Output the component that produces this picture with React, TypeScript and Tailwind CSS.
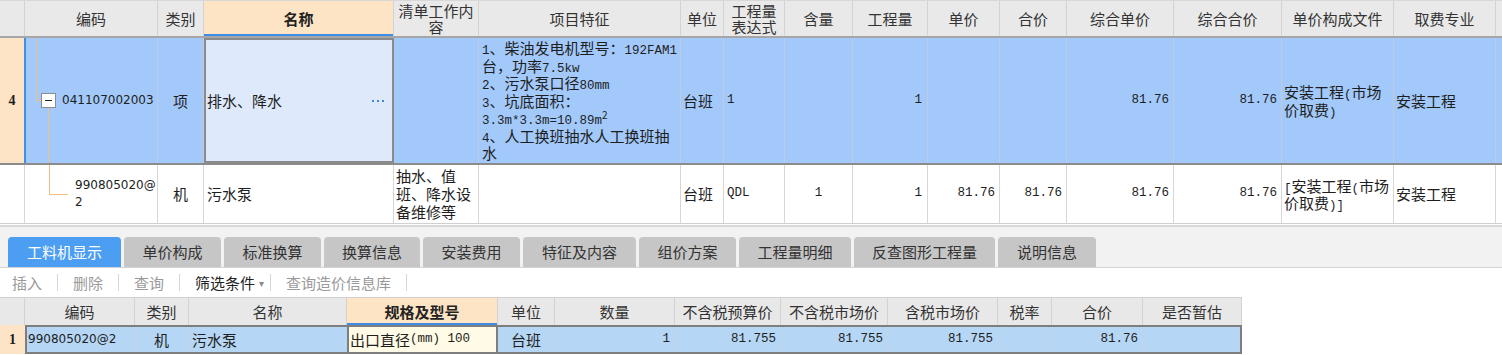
import React from "react";

function Mix({ s }: { s: string }) {
  const parts = s.match(/[\x20-\x7e]+|[^\x20-\x7e]+/g) || [];
  return (
    <>
      {parts.map((p, i) =>
        /^[\x20-\x7e]+$/.test(p) ? (
          <span key={i} className="font-['Liberation_Mono',monospace] text-[12.5px]">
            {p}
          </span>
        ) : (
          <span key={i}>{p}</span>
        )
      )}
    </>
  );
}

function HC({ w, children, hl }: { w: string; children?: React.ReactNode; hl?: boolean }) {
  return (
    <div
      className={`${w} shrink-0 h-full border-r border-[#d3d3d3] flex items-center justify-center text-center leading-[17px] whitespace-nowrap ${
        hl ? "bg-[#fde4c4] font-bold text-[#222] shadow-[inset_0_-2px_0_#3d8de8]" : ""
      }`}
    >
      {children}
    </div>
  );
}

function C({ w, children, cls = "" }: { w: string; children?: React.ReactNode; cls?: string }) {
  return <div className={`${w} shrink-0 h-full flex items-center whitespace-nowrap ${cls}`}>{children}</div>;
}

const Num = ({ v }: { v: string }) => (
  <span className="font-['Liberation_Mono',monospace] text-[12.5px]">{v}</span>
);

const L = ({ children }: { children: React.ReactNode }) => (
  <div className="h-[17.5px] leading-[17.5px] whitespace-nowrap overflow-visible">{children}</div>
);

const tabs: { t: string; w: string; active?: boolean }[] = [
  { t: "工料机显示", w: "w-[113px]", active: true },
  { t: "单价构成", w: "w-[97px]" },
  { t: "标准换算", w: "w-[97px]" },
  { t: "换算信息", w: "w-[96px]" },
  { t: "安装费用", w: "w-[97px]" },
  { t: "特征及内容", w: "w-[113px]" },
  { t: "组价方案", w: "w-[97px]" },
  { t: "工程量明细", w: "w-[112px]" },
  { t: "反查图形工程量", w: "w-[141px]" },
  { t: "说明信息", w: "w-[98px]" },
];

export default function App() {
  const b4 = "border-r border-[#bccbe0]";
  const b2 = "border-r border-[#d6d6d6]";
  const bl = "border-r border-[#c2d3e6]";
  return (
    <div className="w-[1502px] h-[355px] overflow-hidden bg-white font-['Noto_Sans_CJK_SC',sans-serif] text-[15px] text-[#1e1e1e] leading-[17.5px]">
      {/* top header */}
      <div className="flex h-[38px] bg-[#e9e9e9] text-[#333] border-t border-[#d8d8d8] border-b-2 border-b-[#a6a6a6]">
        <HC w="w-[25px]" />
        <HC w="w-[133px]">编码</HC>
        <HC w="w-[46px]">类别</HC>
        <HC w="w-[190px]" hl>
          名称
        </HC>
        <HC w="w-[85px]">
          <div className="leading-[16px]">
            清单工作内
            <br />容
          </div>
        </HC>
        <HC w="w-[202px]">项目特征</HC>
        <HC w="w-[43px]">单位</HC>
        <HC w="w-[61px]">
          <div className="leading-[16px]">
            工程量
            <br />
            表达式
          </div>
        </HC>
        <HC w="w-[68px]">含量</HC>
        <HC w="w-[75px]">工程量</HC>
        <HC w="w-[72px]">单价</HC>
        <HC w="w-[67px]">合价</HC>
        <HC w="w-[107px]">综合单价</HC>
        <HC w="w-[108px]">综合合价</HC>
        <HC w="w-[112px]">单价构成文件</HC>
        <HC w="w-[102px]">取费专业</HC>
        <div className="flex-1" />
      </div>

      {/* row 4 */}
      <div className="flex h-[127px] bg-[#a2c9fa] border-b-2 border-[#8b8b8b]">
        <div className="w-[24px] shrink-0 h-full bg-[#fde4c6] flex items-center justify-center font-['Liberation_Serif',serif] font-bold text-[14px]">
          4
        </div>
        <div className="w-[134px] shrink-0 h-full relative border-l-2 border-l-[#3f8fe8] border-r border-r-[#bccbe0] flex items-center pl-[36px] font-['DejaVu_Sans',sans-serif] text-[12px]">
          <div className="absolute left-[10px] top-0 h-[62px] w-px bg-[#f2c07e]" />
          <div className="absolute left-[10px] top-[62px] w-[5px] h-px bg-[#f2c07e]" />
          <div className="absolute left-[15px] top-[55px] w-[15px] h-[15px] border border-[#8d8d8d] bg-white flex items-center justify-center">
            <div className="w-[7px] h-px bg-[#222]" />
          </div>
          <div className="absolute left-[22px] top-[70px] bottom-0 w-px bg-[#f2c07e]" />
          041107002003
        </div>
        <C w="w-[46px]" cls={`${b4} justify-center`}>
          项
        </C>
        <C w="w-[190px]" cls="bg-[#deeafb] border-2 border-[#8a8a8a] justify-between pl-[1px] pr-[8px]">
          <span>排水、降水</span>
          <span className="flex gap-[3px] items-center">
            <span className="w-[2px] h-[2px] bg-[#3f86dc]" />
            <span className="w-[2px] h-[2px] bg-[#3f86dc]" />
            <span className="w-[2px] h-[2px] bg-[#3f86dc]" />
          </span>
        </C>
        <C w="w-[85px]" cls={b4} />
        <C w="w-[202px]" cls={`${b4} pl-[3px]`}>
          <div className="flex flex-col">
            <L>
              <Mix s="1、柴油发电机型号：192FAM1" />
            </L>
            <L>
              <Mix s="台，功率7.5kw" />
            </L>
            <L>
              <Mix s="2、污水泵口径80mm" />
            </L>
            <L>
              <Mix s="3、坑底面积：" />
            </L>
            <L>
              <Mix s="3.3m*3.3m=10.89m" />
              <span className="text-[10px] relative top-[-5px] leading-none">2</span>
            </L>
            <L>
              <Mix s="4、人工换班抽水人工换班抽" />
            </L>
            <L>水</L>
          </div>
        </C>
        <C w="w-[43px]" cls={`${b4} pl-[2px]`}>
          台班
        </C>
        <C w="w-[61px]" cls={`${b4} pl-[3px]`}>
          <Num v="1" />
        </C>
        <C w="w-[68px]" cls={b4} />
        <C w="w-[75px]" cls={`${b4} justify-end pr-[5px]`}>
          <Num v="1" />
        </C>
        <C w="w-[72px]" cls={b4} />
        <C w="w-[67px]" cls={b4} />
        <C w="w-[107px]" cls={`${b4} justify-end pr-[4px]`}>
          <Num v="81.76" />
        </C>
        <C w="w-[108px]" cls={`${b4} justify-end pr-[4px]`}>
          <Num v="81.76" />
        </C>
        <C w="w-[112px]" cls={`${b4} pl-[2px]`}>
          <div>
            <L>
              <Mix s="安装工程(市场" />
            </L>
            <L>
              <Mix s="价取费)" />
            </L>
          </div>
        </C>
        <C w="w-[102px]" cls={`${b4} pl-[2px]`}>
          安装工程
        </C>
        <div className="flex-1" />
      </div>

      {/* row 2 */}
      <div className="flex h-[59px] bg-white border-b border-[#d0d0d0]">
        <C w="w-[25px]" cls={b2} />
        <div className="w-[133px] shrink-0 h-full relative border-r border-[#d6d6d6] flex items-center pl-[50px] font-['DejaVu_Sans',sans-serif] text-[12px] leading-[17px]">
          <div className="absolute left-[24px] top-0 h-[29px] w-px bg-[#f2c07e]" />
          <div className="absolute left-[24px] top-[29px] w-[19px] h-px bg-[#f2c07e]" />
          <div>
            990805020@
            <br />2
          </div>
        </div>
        <C w="w-[46px]" cls={`${b2} justify-center`}>
          机
        </C>
        <C w="w-[190px]" cls={`${b2} pl-[3px]`}>
          污水泵
        </C>
        <C w="w-[85px]" cls={`${b2} pl-[2px]`}>
          <div className="leading-[18px]">
            <div>抽水、值</div>
            <div>班、降水设</div>
            <div>备维修等</div>
          </div>
        </C>
        <C w="w-[202px]" cls={b2} />
        <C w="w-[43px]" cls={`${b2} pl-[2px]`}>
          台班
        </C>
        <C w="w-[61px]" cls={`${b2} pl-[3px]`}>
          <Num v="QDL" />
        </C>
        <C w="w-[68px]" cls={`${b2} justify-center`}>
          <Num v="1" />
        </C>
        <C w="w-[75px]" cls={`${b2} justify-end pr-[5px]`}>
          <Num v="1" />
        </C>
        <C w="w-[72px]" cls={`${b2} justify-end pr-[4px]`}>
          <Num v="81.76" />
        </C>
        <C w="w-[67px]" cls={`${b2} justify-end pr-[4px]`}>
          <Num v="81.76" />
        </C>
        <C w="w-[107px]" cls={`${b2} justify-end pr-[4px]`}>
          <Num v="81.76" />
        </C>
        <C w="w-[108px]" cls={`${b2} justify-end pr-[4px]`}>
          <Num v="81.76" />
        </C>
        <C w="w-[112px]" cls={`${b2} pl-[2px]`}>
          <div>
            <L>
              <Mix s="[安装工程(市场" />
            </L>
            <L>
              <Mix s="价取费)]" />
            </L>
          </div>
        </C>
        <C w="w-[102px]" cls={`${b2} pl-[2px]`}>
          安装工程
        </C>
        <div className="flex-1" />
      </div>

      {/* separator */}
      <div className="h-[3px] bg-white border-b-2 border-[#d8d8d8]" />

      {/* tabs */}
      <div className="h-[41px] bg-[#f2f2f2] border-b border-[#d4d4d4] flex items-end pl-[8px] gap-[3px]">
        {tabs.map((t) => (
          <div
            key={t.t}
            className={`${t.w} h-[30px] rounded-t-[4px] flex items-center justify-center ${
              t.active ? "bg-[#4b9ef1] text-white" : "bg-[#c6c6c6] text-[#333]"
            }`}
          >
            {t.t}
          </div>
        ))}
      </div>

      {/* toolbar */}
      <div className="h-[29px] flex items-center pl-[12px] text-[#9a9a9a]">
        <span className="pr-[15px]">插入</span>
        <span className="w-px h-[17px] bg-[#d6d6d6]" />
        <span className="px-[15px]">删除</span>
        <span className="w-px h-[17px] bg-[#d6d6d6]" />
        <span className="px-[15px]">查询</span>
        <span className="w-px h-[17px] bg-[#d6d6d6]" />
        <span className="pl-[15px] text-[#222]">筛选条件</span>
        <span className="pl-[4px] pr-[6px] text-[#8a8a8a] text-[10px]">▾</span>
        <span className="w-px h-[17px] bg-[#d6d6d6]" />
        <span className="px-[15px]">查询造价信息库</span>
        <span className="w-px h-[17px] bg-[#d6d6d6]" />
      </div>

      {/* lower header */}
      <div className="flex h-[28px] w-[1242px] bg-[#e8e8e8] text-[#333] border-t border-[#cfcfcf]">
        <HC w="w-[25px]" />
        <HC w="w-[110px]">编码</HC>
        <HC w="w-[54px]">类别</HC>
        <HC w="w-[158px]">名称</HC>
        <HC w="w-[151px]" hl>
          规格及型号
        </HC>
        <HC w="w-[57px]">单位</HC>
        <HC w="w-[120px]">数量</HC>
        <HC w="w-[106px]">不含税预算价</HC>
        <HC w="w-[107px]">不含税市场价</HC>
        <HC w="w-[110px]">含税市场价</HC>
        <HC w="w-[54px]">税率</HC>
        <HC w="w-[91px]">合价</HC>
        <HC w="w-[99px]">是否暂估</HC>
      </div>

      {/* lower row 1 */}
      <div className="flex h-[29px] w-[1242px]">
        <div className="w-[25px] shrink-0 h-full bg-[#fde4c6] flex items-center justify-center font-['Liberation_Serif',serif] font-bold text-[14px]">
          1
        </div>
        <div className="flex flex-1 h-full border-2 border-[#7e7e7e] bg-[#b5d6f4]">
          <C w="w-[108px]" cls={`${bl} pl-[1px] font-['DejaVu_Sans',sans-serif] text-[12px]`}>
            990805020@2
          </C>
          <C w="w-[54px]" cls={`${bl} justify-center`}>
            机
          </C>
          <C w="w-[158px]" cls="pl-[3px]">
            污水泵
          </C>
          <C w="w-[151px]" cls="bg-[#fffbe6] border-x-2 border-[#7e7e7e] pl-[1px]">
            <Mix s="出口直径(mm) 100" />
          </C>
          <C w="w-[57px]" cls={`${bl} justify-center`}>
            台班
          </C>
          <C w="w-[120px]" cls={`${bl} justify-end pr-[4px]`}>
            <Num v="1" />
          </C>
          <C w="w-[106px]" cls={`${bl} justify-end pr-[4px]`}>
            <Num v="81.755" />
          </C>
          <C w="w-[107px]" cls={`${bl} justify-end pr-[4px]`}>
            <Num v="81.755" />
          </C>
          <C w="w-[110px]" cls={`${bl} justify-end pr-[4px]`}>
            <Num v="81.755" />
          </C>
          <C w="w-[54px]" cls={bl} />
          <C w="w-[91px]" cls={`${bl} justify-end pr-[4px]`}>
            <Num v="81.76" />
          </C>
          <C w="w-[97px]" cls="" />
        </div>
      </div>
    </div>
  );
}
